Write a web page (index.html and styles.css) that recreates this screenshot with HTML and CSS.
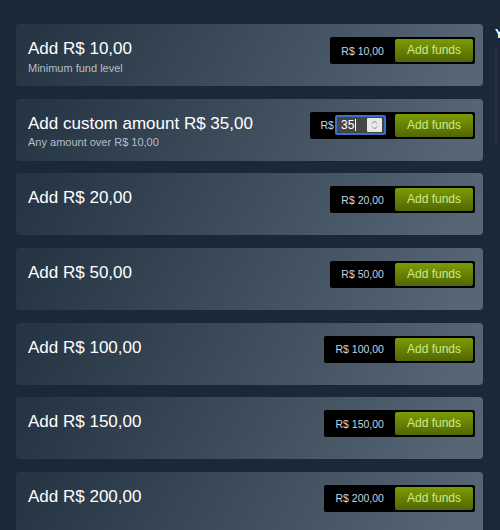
FILE: index.html
```html
<!DOCTYPE html>
<html>
<head>
<meta charset="utf-8">
<link rel="stylesheet" href="styles.css">
</head>
<body>
<div class="page">
  <div class="rows">
    <div class="card">
      <div class="info">
        <div class="title">Add R$ 10,00</div>
        <div class="sub">Minimum fund level</div>
      </div>
      <div class="action">
        <div class="price">R$ 10,00</div>
        <div class="btn">Add funds</div>
      </div>
    </div>
    <div class="card">
      <div class="info">
        <div class="title">Add custom amount R$ 35,00</div>
        <div class="sub">Any amount over R$ 10,00</div>
      </div>
      <div class="action custom">
        <div class="cur">R$</div>
        <div class="input">
          <span class="val">35</span><span class="caret"></span>
          <div class="spin">
            <svg width="15" height="14" viewBox="0 0 15 14"><path d="M5 5.5 L7.5 3 L10 5.5" fill="none" stroke="#8a8a8a" stroke-width="1"/><path d="M5 8.5 L7.5 11 L10 8.5" fill="none" stroke="#8a8a8a" stroke-width="1"/></svg>
          </div>
        </div>
        <div class="btn">Add funds</div>
      </div>
    </div>
    <div class="card">
      <div class="info"><div class="title">Add R$ 20,00</div></div>
      <div class="action"><div class="price">R$ 20,00</div><div class="btn">Add funds</div></div>
    </div>
    <div class="card">
      <div class="info"><div class="title">Add R$ 50,00</div></div>
      <div class="action"><div class="price">R$ 50,00</div><div class="btn">Add funds</div></div>
    </div>
    <div class="card">
      <div class="info"><div class="title">Add R$ 100,00</div></div>
      <div class="action"><div class="price">R$ 100,00</div><div class="btn">Add funds</div></div>
    </div>
    <div class="card">
      <div class="info"><div class="title">Add R$ 150,00</div></div>
      <div class="action"><div class="price">R$ 150,00</div><div class="btn">Add funds</div></div>
    </div>
    <div class="card">
      <div class="info"><div class="title">Add R$ 200,00</div></div>
      <div class="action"><div class="price">R$ 200,00</div><div class="btn">Add funds</div></div>
    </div>
  </div>
  <div class="side">
    <div class="side-title">YOUR STEAM ACCOUNT</div>
    <div class="side-panel"></div>
  </div>
</div>
</body>
</html>
```

FILE: styles.css
```css
html, body {
  margin: 0;
  padding: 0;
  background: #1b2838;
  overflow: hidden;
  height: 530px;
}
body {
  font-family: "Liberation Sans", Arial, sans-serif;
  color: #fff;
}
.page {
  display: flex;
  gap: 12px;
  padding: 24px 0 0 16px;
  width: 800px;
}
.rows {
  width: 467px;
  flex: none;
  display: flex;
  flex-direction: column;
  gap: 12.67px;
}
.card {
  height: 62px;
  box-sizing: border-box;
  padding: 0 8px 0 12px;
  display: flex;
  justify-content: space-between;
  align-items: flex-start;
  border-radius: 4px;
  background: linear-gradient(-60deg, rgba(226,244,255,0.3) 5%, rgba(84,107,115,0.2) 95%);
}
.info {
  padding-top: 15px;
}
.title {
  font-size: 17px;
  line-height: 20px;
  color: #ffffff;
}
.sub {
  margin-top: 1.5px;
  font-size: 11px;
  line-height: 14px;
  color: #b4bec8;
}
.action {
  margin-top: 13px;
  height: 27px;
  box-sizing: border-box;
  padding: 2px 2px 2px 0;
  background: #000;
  border-radius: 2px;
  display: flex;
  align-items: center;
}
.price {
  padding: 0 11px;
  font-size: 10.5px;
  color: #c6d4df;
}
.btn {
  height: 23px;
  line-height: 23px;
  padding: 0 12px;
  font-size: 12px;
  color: #d2e885;
  border-radius: 2px;
  background: linear-gradient(to bottom, #799905 5%, #536904 95%);
}
.custom {
  padding-left: 11px;
}
.cur {
  font-size: 10.5px;
  color: #c6d4df;
  margin-right: 1px;
}
.input {
  width: 51px;
  height: 20px;
  box-sizing: border-box;
  border: 2px solid #3d6fcc;
  border-radius: 2px;
  background: #454545;
  display: flex;
  align-items: center;
  padding-left: 4px;
  margin-right: 9px;
}
.val {
  font-size: 12px;
  color: #fff;
}
.caret {
  width: 1px;
  height: 12px;
  background: #fff;
  margin-left: 1px;
}
.spin {
  margin-left: auto;
  margin-right: 2px;
  width: 15px;
  height: 14px;
  background: #e8e8e8;
  border-radius: 1px;
  display: flex;
}
.side {
  width: 300px;
  flex: none;
}
.side-title {
  font-size: 12px;
  font-weight: bold;
  line-height: 14px;
  margin-top: 3px;
  letter-spacing: 1px;
  color: #fff;
}
.side-panel {
  margin-top: 6px;
  height: 96px;
  background: #1e2a39;
  border-left: 2px solid #243244;
}
```
